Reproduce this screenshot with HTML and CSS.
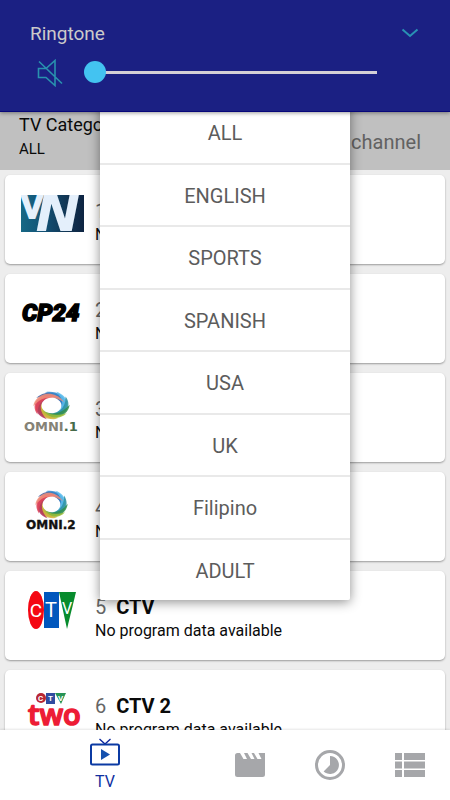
FILE: index.html
```html
<!DOCTYPE html>
<html lang="en">
<head>
<meta charset="utf-8">
<meta name="viewport" content="width=device-width, initial-scale=1">
<title>TV</title>
<link rel="stylesheet" href="styles.css">
</head>
<body>
<header class="volume">
  <div class="volume-top">
    <label for="ringtone">Ringtone</label>
    <button class="expand" type="button" aria-label="Expand">
      <svg width="18" height="10" viewBox="0 0 18 10"><path d="M1.5 1.5 9 8l7.5-6.5" fill="none" stroke="#2992b4" stroke-width="2"/></svg>
    </button>
  </div>
  <div class="volume-row">
    <svg width="26" height="28" viewBox="0 0 26 28" fill="none" stroke="#2992ae" stroke-width="1.6"><path d="M1.5 9.500H9L18 1.500V26.500L9 18.500H1.500ZM2 2.500 25 24.500"/></svg>
    <input id="ringtone" type="range" min="0" max="100" value="0">
  </div>
</header>
<main class="screen">
  <div class="filter">
    <div class="category"><span class="category-title">TV Category</span><span class="category-value">ALL</span></div>
    <input class="search" type="text" placeholder="Search channel" aria-label="Search channel">
  </div>
  <ul class="channels">
    <li class="card">
      <svg class="logo" viewBox="0 0 80 89">
        <defs><linearGradient id="sea"><stop stop-color="#176885"/><stop offset=".35" stop-color="#125276"/><stop offset=".75" stop-color="#123452"/><stop offset="1" stop-color="#0d2442"/></linearGradient><clipPath id="frame"><path d="M16 20h63v37H16z"/></clipPath></defs>
        <path d="M16 20h63v37H16z" fill="url(#sea)"/>
        <g clip-path="url(#frame)" fill="#e4effb" stroke="#e4effb" font-family="Liberation Sans" font-weight="bold"><text x="16" y="43" font-size="33" stroke-width="2">V</text><text x="32" y="55" font-size="56" font-style="italic" stroke-width="2">N</text></g>
      </svg>
      <div class="info"><p class="name"><span>1</span></p><p>No program data available</p></div>
    </li>
    <li class="card">
      <svg class="logo" viewBox="0 0 80 89"><text x="17" y="47" font-family="Roboto" font-size="24" font-weight="900" font-style="italic" stroke="#000" stroke-width="1.500">CP24</text></svg>
      <div class="info"><p class="name"><span>2</span></p><p>No program data available</p></div>
    </li>
    <li class="card">
      <svg class="logo" viewBox="0 0 80 89">
        <defs><path id="blade" d="M-14 -9C-6 -19 13 -18 12 4C8 -9 0 -14 -14 -9Z"/>
        <g id="swirl" fill-opacity=".85">
          <use href="#blade" fill="#34589f"/>
          <use href="#blade" fill="#2f86cc" transform="rotate(36)"/>
          <use href="#blade" fill="#5bbcec" transform="rotate(72)"/>
          <use href="#blade" fill="#2c8fa0" transform="rotate(108)"/>
          <use href="#blade" fill="#2f8d4b" transform="rotate(144)"/>
          <use href="#blade" fill="#9cbd36" transform="rotate(180)"/>
          <use href="#blade" fill="#d4b13c" transform="rotate(216)"/>
          <use href="#blade" fill="#b02d5b" transform="rotate(252)"/>
          <use href="#blade" fill="#e04458" transform="rotate(288)"/>
          <use href="#blade" fill="#f08d78" transform="rotate(324)"/>
        </g></defs>
        <svg x="28" y="18" width="37" height="29" viewBox="-17 -17 34 34" preserveAspectRatio="none"><use href="#swirl"/></svg>
        <text x="19" y="58" font-family="DejaVu Sans" font-size="13" font-weight="bold" fill="#858276">OMNI<tspan fill="#466a48">.1</tspan></text>
      </svg>
      <div class="info"><p class="name"><span>3</span></p><p>No program data available</p></div>
    </li>
    <li class="card">
      <svg class="logo" viewBox="0 0 80 89"><svg x="30" y="18" width="33" height="29" viewBox="-17 -17 34 34" preserveAspectRatio="none"><use href="#swirl"/></svg><text x="21" y="57" font-family="DejaVu Sans" font-size="12" font-weight="bold" fill="#111" stroke="#111" stroke-width=".4">OMNI.2</text></svg>
      <div class="info"><p class="name"><span>4</span></p><p>No program data available</p></div>
    </li>
    <li class="card">
      <svg class="logo" viewBox="0 0 80 89"><ellipse cx="31" cy="39" rx="8" ry="19" fill="#f40712"/><path d="M39 21h15v36H39z" fill="#0057bd"/><path d="M54 21h17l-9 37Z" fill="#078b2d"/><g fill="#fff" font-family="Roboto" text-anchor="middle"><text x="31" y="46" font-size="19">C</text><text x="46" y="46" font-size="20">T</text><text x="62" y="43" font-size="16">V</text></g></svg>
      <div class="info"><p class="name"><span>5</span> <b>CTV</b></p><p>No program data available</p></div>
    </li>
    <li class="card">
      <svg class="logo" viewBox="0 0 80 89"><text x="23" y="55" font-family="Open Sans" font-size="29" font-weight="600" fill="#ed1c35" stroke="#ed1c35" stroke-width="1.500" stroke-linejoin="round">two</text><circle cx="36" cy="28" r="5" fill="#b82733"/><path d="M41 23h9v11h-9z" fill="#304ca0"/><path d="M50 23h11l-5 11Z" fill="#269354"/><text x="33 43 53" y="31" fill="#fff" font-family="Roboto" font-weight="bold" font-size="8">CTV</text></svg>
      <div class="info"><p class="name"><span>6</span> <b>CTV 2</b></p><p>No program data available</p></div>
    </li>
  </ul>
  <div class="menu">
    <button type="button">ALL</button><button type="button">ENGLISH</button><button type="button">SPORTS</button><button type="button">SPANISH</button><button type="button">USA</button><button type="button">UK</button><button type="button">Filipino</button><button type="button">ADULT</button>
  </div>
</main>
<nav class="tabs">
  <a class="tab active" href="#tv">
    <svg width="30" height="28" viewBox="0 0 30 28"><path d="M9.500 1 15 6l5.500-5" fill="none" stroke="#0a249c" stroke-width="1.300"/><rect x="1" y="6.500" width="28" height="20" rx="1.500" fill="none" stroke="#0b3aa3" stroke-width="2"/><path d="M11 11v11l9-5.500Z" fill="#1551ae"/></svg>
    <span>TV</span>
  </a>
  <a class="tab" href="#movies" aria-label="Movies"><svg width="30" height="24" viewBox="0 0 30 24"><path fill="#a6a7aa" d="M2.500 0H5L8.500 6H12L9 0H12.500L16 6H19.500L16.500 0H19L22.500 6H26.500L23.500 0H30V21.500Q30 24 27.500 24H2.500Q0 24 0 21.500V2.500Q0 0 2.500 0Z"/></svg></a>
  <a class="tab" href="#catchup" aria-label="Catch up"><svg width="30" height="30" viewBox="0 0 30 30"><circle cx="15" cy="15" r="13.500" fill="none" stroke="#a6a7aa" stroke-width="3"/><path fill="#a6a7aa" d="M15 6a9 9 0 1 1-6.400 15.400L15 15Z"/></svg></a>
  <a class="tab" href="#list" aria-label="List"><svg width="30" height="24" viewBox="0 0 30 24"><path fill="#a6a7aa" d="M0 0h7v7H0zM9 0h21v7H9zM0 8.500h7v7H0zM9 8.500h21v7H9zM0 17h7v7H0zM9 17h21v7H9z"/></svg></a>
</nav>
</body>
</html>
```
FILE: styles.css
```css
* { box-sizing: border-box; }
body { margin: 0; height: 100vh; display: flex; flex-direction: column; overflow: hidden; background: #ededed; color: #0a0a0a; font-family: Roboto, sans-serif; font-size: 16px; }
button, input { font: inherit; border: 0; padding: 0; margin: 0; background: none; }
p { margin: 0; }
svg { display: block; flex: none; }

.volume { position: relative; z-index: 3; flex: none; padding: 20px 30px 24px; background: #1b2083; border-bottom: 1px solid #07077a; box-shadow: 0 1px 4px rgba(0, 0, 0, .4); }
.volume-top { display: flex; justify-content: space-between; align-items: center; height: 26px; color: #cbcaca; font-size: 19px; }
.expand { display: flex; padding: 0 1px; }
.volume-row { display: flex; align-items: center; gap: 21px; height: 41px; padding: 12px 43px 0 7px; }
#ringtone { flex: 1; min-width: 0; height: 22px; appearance: none; }
#ringtone::-webkit-slider-runnable-track { height: 3px; background: linear-gradient(#d4d0d6, #d4d0d6) 8px 0 no-repeat; }
#ringtone::-webkit-slider-thumb { appearance: none; width: 22px; height: 22px; margin-top: -10px; border-radius: 50%; background: #43c3f1; }

.screen { position: relative; flex: 1; min-height: 0; }
.filter { display: flex; justify-content: space-between; height: 58px; padding: 0 29px 0 19px; background: #c0c0c0; }
.category { display: flex; flex-direction: column; }
.category-title { font-size: 18px; line-height: 26px; }
.category-value { font-size: 15px; line-height: 22px; }
.search { width: 160px; height: 60px; text-align: right; font-size: 20px; }
.search::placeholder { color: #626262; opacity: 1; }

.channels { display: flex; flex-direction: column; gap: 10px; margin: 0; padding: 5px 5px 0; list-style: none; }
.card { display: flex; gap: 10px; height: 89px; background: #fff; border-radius: 5px; box-shadow: 0 1px 2px rgba(0, 0, 0, .35); }
.logo { width: 80px; height: 89px; }
.info { padding-top: 24px; line-height: 24px; }
.name { font-size: 20px; line-height: 24px; }
.name span { color: #666; margin-right: 5px; }

.menu { position: absolute; z-index: 1; top: -10px; left: calc(50% - 125px); width: 250px; height: 498px; display: grid; grid-auto-rows: 1fr; gap: 2px; background: #e9e9e9; border-radius: 2px; overflow: hidden; box-shadow: 0 2px 12px rgba(0, 0, 0, .45); }
.menu button { padding-top: 2px; background: #fff; color: #5c5c5c; font-size: 20px; }

.tabs { position: relative; z-index: 2; flex: none; display: grid; grid-template-columns: 21fr 8fr 8fr 8fr; height: 70px; background: #fff; box-shadow: 0 -1px 2px rgba(0, 0, 0, .1); }
.tab { display: flex; flex-direction: column; align-items: center; justify-content: center; gap: 6px; color: #1030a0; text-decoration: none; line-height: 20px; }
```
